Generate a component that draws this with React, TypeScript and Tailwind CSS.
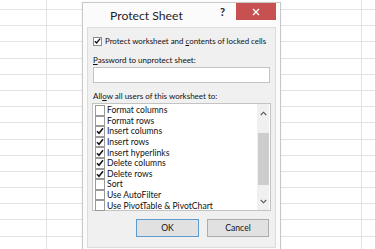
import React from "react";

const font = { fontFamily: 'Lato, "Noto Sans", "Liberation Sans", sans-serif' };

function Check() {
  return (
    <svg width="8" height="8" viewBox="0 0 8 8" className="block">
      <path d="M1 4.2 L3 6.3 L7 1.2" fill="none" stroke="#111" strokeWidth="1.5" />
    </svg>
  );
}

function Box({ checked, tall }: { checked: boolean; tall?: boolean }) {
  return (
    <div
      className={
        tall
          ? "w-[10px] h-[10.6px] border border-[#9a9a9a] bg-white flex items-center justify-center shrink-0"
          : "w-[9px] h-[9px] border border-[#8c8c8c] bg-white flex items-center justify-center shrink-0"
      }
    >
      {checked ? <Check /> : null}
    </div>
  );
}

const items: [string, boolean][] = [
  ["Format columns", false],
  ["Format rows", false],
  ["Insert columns", true],
  ["Insert rows", true],
  ["Insert hyperlinks", true],
  ["Delete columns", true],
  ["Delete rows", true],
  ["Sort", false],
  ["Use AutoFilter", false],
  ["Use PivotTable & PivotChart", false],
];

export default function App() {
  const rows = Array.from({ length: 15 });
  return (
    <div className="relative w-[375px] h-[249px] overflow-hidden bg-white" style={font}>
      {/* spreadsheet grid */}
      <div className="flex flex-col">
        <div className="h-[10px] border-b border-[#e3e3e3] flex">
          <div className="w-[47px] border-r border-[#e3e3e3]" />
          <div className="w-[315px] border-r border-[#e3e3e3]" />
        </div>
        {rows.map((_, i) => (
          <div key={i} className="h-[16.2px] border-b border-[#e3e3e3] flex">
            <div className="w-[47px] border-r border-[#e3e3e3]" />
            <div className="w-[315px] border-r border-[#e3e3e3]" />
          </div>
        ))}
      </div>

      {/* dialog */}
      <div className="absolute left-[82px] top-[2px] w-[199px] h-[250px] bg-[#fbfbfb] border border-[#c9c9c9] shadow-[0_0_2px_rgba(0,0,0,0.08)] flex flex-col">
        <div className="h-[24px] relative shrink-0">
          <div className="absolute left-[27px] top-[2px] text-[12.2px] leading-[22px] text-[#1e1e1e] whitespace-nowrap">Protect Sheet</div>
          <div className="absolute left-[137px] top-[1px] text-[11px] font-bold leading-[16px] text-[#222]">?</div>
          <div className="absolute left-[153px] top-[0px] w-[40px] h-[17px] bg-[#c75050] flex items-center justify-center">
            <svg width="8" height="8" viewBox="0 0 8 8">
              <path d="M1 1 L7 7 M7 1 L1 7" stroke="#fff" strokeWidth="1.4" />
            </svg>
          </div>
        </div>
        <div className="mx-[4px] flex-1 bg-[#f0f0f0] border border-[#dcdcdc] flex flex-col text-[8px] text-[#111] leading-[12px] whitespace-nowrap">
          <div className="flex items-center gap-[3px] pl-[5px] pt-[7px] text-[7.9px]">
            <Box checked />
            <span>
              Protect worksheet and <span className="underline">c</span>ontents of locked cells
            </span>
          </div>
          <div className="pl-[5px] mt-[7px]">
            <span className="underline">P</span>assword to unprotect sheet:
          </div>
          <div className="ml-[5px] mt-[1px] w-[177px] h-[16px] bg-white border border-[#c3c3c3]" />
          <div className="pl-[5px] mt-[7px]">
            All<span className="underline">o</span>w all users of this worksheet to:
          </div>
          <div className="ml-[4px] mt-[1px] w-[179px] h-[108px] bg-white border border-[#c3c3c3] flex text-[8.6px]">
            <div className="flex-1 flex flex-col pt-[1px] pl-[2px]">
              {items.map(([label, c]) => (
                <div key={label} className="h-[10.6px] flex items-center gap-[2px]">
                  <Box checked={c} tall />
                  <span className="leading-[10px]">{label}</span>
                </div>
              ))}
            </div>
            <div className="w-[12px] mr-[1px] bg-[#f0f0f0] flex flex-col items-center">
              <div className="h-[18px] flex items-center justify-center">
                <svg width="7" height="5" viewBox="0 0 7 5">
                  <path d="M0.8 4 L3.5 1.2 L6.2 4" fill="none" stroke="#555" strokeWidth="1.1" />
                </svg>
              </div>
              <div className="mt-[11px] w-[11px] h-[52px] bg-[#cdcdcd]" />
              <div className="flex-1" />
              <div className="h-[18px] flex items-center justify-center">
                <svg width="7" height="5" viewBox="0 0 7 5">
                  <path d="M0.8 1 L3.5 3.8 L6.2 1" fill="none" stroke="#555" strokeWidth="1.1" />
                </svg>
              </div>
            </div>
          </div>
          <div className="flex justify-end gap-[8px] pr-[6px] mt-[8px] text-[8.6px]">
            <div className="w-[63px] h-[18px] bg-[#e1e1e1] border border-[#5b9bd5] flex items-center justify-center">OK</div>
            <div className="w-[62px] h-[18px] bg-[#e1e1e1] border border-[#adadad] flex items-center justify-center">Cancel</div>
          </div>
        </div>
        <div className="h-[3px]" />
      </div>
    </div>
  );
}
